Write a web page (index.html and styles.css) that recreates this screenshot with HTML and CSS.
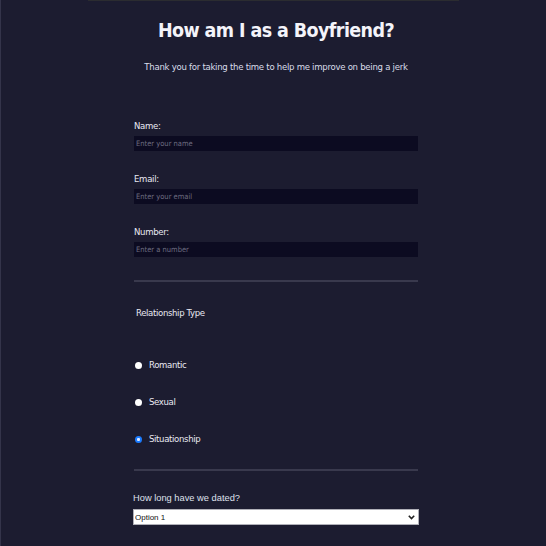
FILE: index.html
```html
<!DOCTYPE html>
<html lang="en">
<head>
<meta charset="utf-8">
<title>How am I as a Boyfriend?</title>
<link rel="stylesheet" href="styles.css">
</head>
<body>
<div class="page">
  <header class="intro">
    <h1 class="title">How am I as a Boyfriend?</h1>
    <p class="subtitle">Thank you for taking the time to help me improve on being a jerk</p>
  </header>
  <form class="form">
    <div class="field">
      <label class="label" for="name">Name:</label>
      <input class="input" id="name" type="text" placeholder="Enter your name">
    </div>
    <div class="field">
      <label class="label" for="email">Email:</label>
      <input class="input" id="email" type="email" placeholder="Enter your email">
    </div>
    <div class="field">
      <label class="label" for="number">Number:</label>
      <input class="input" id="number" type="number" placeholder="Enter a number">
    </div>
    <hr class="rule">
    <div class="group">
      <p class="group-title">Relationship Type</p>
      <label class="radio"><input class="radio-input" type="radio" name="type"> Romantic</label>
      <label class="radio"><input class="radio-input" type="radio" name="type"> Sexual</label>
      <label class="radio"><input class="radio-input" type="radio" name="type" checked> Situationship</label>
    </div>
    <hr class="rule rule-second">
    <div class="select-field">
      <label class="select-label" for="dated">How long have we dated?</label>
      <div class="select-wrap">
        <select class="select" id="dated">
          <option>Option 1</option>
          <option>Option 2</option>
        </select>
        <svg class="chevron" width="7" height="5" viewBox="0 0 7 5" aria-hidden="true">
          <path d="M0.8 0.8 L3.5 3.6 L6.2 0.8" fill="none" stroke="#222" stroke-width="1.6"/>
        </svg>
      </div>
    </div>
  </form>
</div>
</body>
</html>
```
FILE: styles.css
```css
html, body {
  margin: 0;
  padding: 0;
  background: #1c1c30;
}
body {
  border-left: 1px solid #34344a;
  min-height: 546px;
  box-sizing: border-box;
}
.page {
  width: 371px;
  margin: 0 auto;
  border-top: 1px solid #2b2c30;
  padding-top: 18px;
  box-sizing: border-box;
  font-family: "DejaVu Sans Condensed", "DejaVu Sans", sans-serif;
  color: #e9e9f2;
}
.intro {
  text-align: center;
  padding-left: 5px;
}
.title {
  margin: 0;
  font-size: 19.5px;
  line-height: 24px;
  letter-spacing: -0.6px;
  font-weight: bold;
  color: #f4f4fa;
}
.subtitle {
  margin: 18px 0 0;
  font-size: 9.5px;
  line-height: 12px;
  letter-spacing: -0.27px;
  color: #d9dcea;
}
.form {
  margin: 47px 0 0 46px;
  width: 284px;
  display: flex;
  flex-direction: column;
}
.field {
  display: flex;
  flex-direction: column;
  gap: 4px;
  margin-bottom: 22px;
}
.field:nth-child(3) {
  margin-bottom: 0;
}
.label {
  font-size: 9.5px;
  line-height: 12px;
  letter-spacing: -0.3px;
}
.input {
  height: 15px;
  box-sizing: border-box;
  border: none;
  outline: none;
  background: #0c0b21;
  color: #e9e9f2;
  padding: 0 2px;
  font-family: "DejaVu Sans Condensed", "DejaVu Sans", sans-serif;
  font-size: 7.5px;
}
.input::placeholder {
  color: #6c6c80;
}
.rule {
  border: none;
  height: 2px;
  background: #39394d;
  margin: 23px 0 0;
  width: 284px;
}
.rule-second {
  margin-top: 24px;
}
.group {
  display: flex;
  flex-direction: column;
  gap: 25px;
  margin-top: 25px;
}
.group-title {
  margin: 0 0 15px 2px;
  font-size: 9.5px;
  line-height: 12px;
  letter-spacing: -0.35px;
}
.radio {
  display: flex;
  align-items: center;
  gap: 7px;
  font-size: 9.5px;
  line-height: 12px;
  letter-spacing: -0.35px;
}
.radio-input {
  appearance: none;
  -webkit-appearance: none;
  margin: 0 0 0 1px;
  width: 7px;
  height: 7px;
  border-radius: 50%;
  background: #ffffff;
}
.radio-input:checked {
  background: radial-gradient(circle, #dfe9ff 0 1.3px, #1a7bff 1.7px);
}
.select-field {
  display: flex;
  flex-direction: column;
  gap: 5px;
  margin: 21px 0 0 -1px;
  width: 286px;
}
.select-label {
  font-family: "Liberation Sans", Arial, sans-serif;
  font-size: 9.3px;
  line-height: 12px;
  color: #dfe0ec;
}
.select-wrap {
  position: relative;
  display: flex;
}
.select {
  appearance: none;
  -webkit-appearance: none;
  flex: 1;
  height: 16px;
  box-sizing: border-box;
  font-family: "Liberation Sans", Arial, sans-serif;
  font-size: 8px;
  padding: 0 1px;
  border: 1px solid #b0b0b8;
  border-radius: 0;
  background: #ffffff;
  color: #111;
}
.chevron {
  position: absolute;
  right: 4px;
  top: 6px;
  pointer-events: none;
}
```
